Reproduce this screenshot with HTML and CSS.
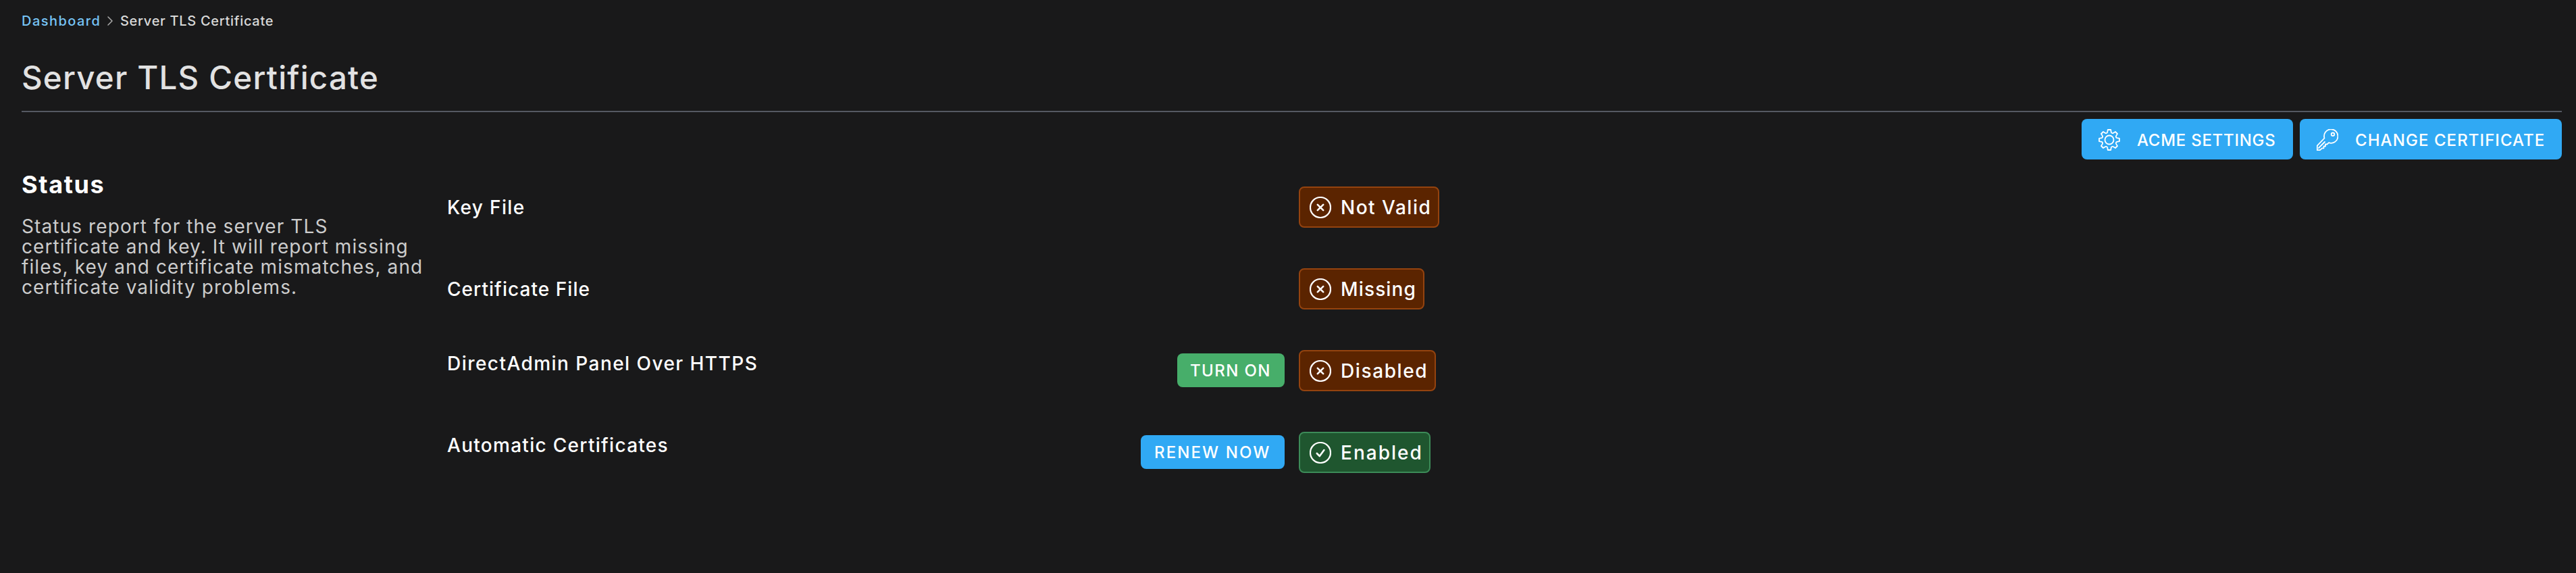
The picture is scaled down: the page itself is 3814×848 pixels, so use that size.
FILE: index.html
```html
<!DOCTYPE html>
<html lang="en">

<head>
    <meta charset="UTF-8">
    <meta name="viewport" content="width=device-width, initial-scale=1.0">
    <title>Server TLS Certificate</title>
    <link rel="stylesheet" href="styles.css">
</head>

<body>
    <div class="page">
        <nav class="breadcrumbs">
            <a class="crumb-link">Dashboard</a>
            <svg class="crumb-arrow" viewBox="0 0 8 14">
                <path d="M1 1l6 6-6 6" />
            </svg>
            <span class="crumb-current">Server TLS Certificate</span>
        </nav>
        <h1 class="title">Server TLS Certificate</h1>
        <div class="toolbar">
            <button class="btn btn-acme">
                <svg class="btn-icon" viewBox="0 0 32 32">
                    <path d="M13.800 1h4.400l.6 3.600q.2 1 1.300 1.400t2-.2L25 4l3 3-1.800 2.900q-.6.900-.2 2t1.400 1.300l3.600.6v4.400l-3.600.6q-1 .2-1.400 1.300t.2 2L28 25l-3 3-2.900-1.800q-.9-.6-2-.2t-1.300 1.400l-.6 3.600h-4.400l-.6-3.600q-.2-1-1.300-1.400t-2 .2L7 28l-3-3 1.800-2.900q.6-.9.2-2t-1.400-1.300L1 18.200v-4.400l3.600-.6q1-.2 1.400-1.300t-.2-2L4 7l3-3 2.900 1.800q.9.600 2 .2t1.300-1.400z" />
                    <circle cx="16" cy="16" r="6.500" />
                </svg>
                <span>ACME SETTINGS</span>
            </button>
            <button class="btn btn-change">
                <svg class="btn-icon" viewBox="0 0 32 32">
                    <path d="M11.500 13.500A10.200 10.200 0 1 1 18 20.200l-2.500 2.300H13v3h-2.500v2.800H8L5 31.200H.8v-6.500z" />
                    <path d="M3 28l9-9" />
                    <circle cx="24" cy="7.800" r="2.300" />
                </svg>
                <span>CHANGE CERTIFICATE</span>
            </button>
        </div>
        <div class="section">
            <div class="section-info">
                <h2>Status</h2>
                <p>Status report for the server TLS certificate and key. It will report missing files, key and certificate mismatches, and certificate validity problems.</p>
            </div>
            <div class="rows">
                <div class="row">
                    <div class="label">Key File</div>
                    <div class="action"></div>
                    <div class="badge danger badge-invalid">
                        <svg class="badge-icon" viewBox="0 0 32 32">
                            <circle cx="16" cy="16" r="15" />
                            <path d="M11.800 11.800l8.400 8.400M20.200 11.800l-8.400 8.400" />
                        </svg>
                        <span>Not Valid</span>
                    </div>
                </div>
                <div class="row">
                    <div class="label label-cert">Certificate File</div>
                    <div class="action"></div>
                    <div class="badge danger badge-missing">
                        <svg class="badge-icon" viewBox="0 0 32 32">
                            <circle cx="16" cy="16" r="15" />
                            <path d="M11.800 11.800l8.400 8.400M20.200 11.800l-8.400 8.400" />
                        </svg>
                        <span>Missing</span>
                    </div>
                </div>
                <div class="row">
                    <div class="label label-top">DirectAdmin Panel Over HTTPS</div>
                    <div class="action">
                        <button class="btn-small green">TURN ON</button>
                    </div>
                    <div class="badge danger badge-disabled">
                        <svg class="badge-icon" viewBox="0 0 32 32">
                            <circle cx="16" cy="16" r="15" />
                            <path d="M11.800 11.800l8.400 8.400M20.200 11.800l-8.400 8.400" />
                        </svg>
                        <span>Disabled</span>
                    </div>
                </div>
                <div class="row">
                    <div class="label label-top label-auto">Automatic Certificates</div>
                    <div class="action">
                        <button class="btn-small blue">RENEW NOW</button>
                    </div>
                    <div class="badge success badge-enabled">
                        <svg class="badge-icon" viewBox="0 0 32 32">
                            <circle cx="16" cy="16" r="15" />
                            <path d="M10.800 17l4 4 6.600-9" />
                        </svg>
                        <span>Enabled</span>
                    </div>
                </div>
            </div>
        </div>
    </div>
</body>

</html>
```
FILE: styles.css
```css
* {
    margin: 0;
    padding: 0;
    box-sizing: border-box;
}

body {
    background-color: #19191a;
    color: #fff;
    font-family: Inter, "Open Sans", sans-serif;
    font-weight: 500;
}

svg {
    display: block;
    flex-shrink: 0;
    fill: none;
    stroke: #fff;
    stroke-linecap: round;
    stroke-linejoin: round;
}

.page {
    padding: 20px 21px 0 32px;
}

.breadcrumbs {
    display: flex;
    align-items: center;
    height: 22px;
    font-size: 20px;
    line-height: 22px;
    font-weight: 450;
    white-space: nowrap;
}

.crumb-link {
    width: 127px;
    color: #76c3f5;
    letter-spacing: 1.45px;
}

.crumb-arrow {
    width: 8px;
    height: 14px;
    margin-right: 11px;
    stroke: #aaa;
    stroke-width: 1.5;
}

.crumb-current {
    color: #d9d9d9;
    letter-spacing: 0.7px;
}

.title {
    margin-top: 45px;
    padding-bottom: 21px;
    border-bottom: 2px solid #555962;
    color: #e2e2e2;
    font-size: 47.5px;
    font-weight: 500;
    line-height: 56px;
    letter-spacing: 1.19px;
}

/* 工具栏 */
.toolbar {
    display: flex;
    justify-content: flex-end;
    gap: 10px;
    margin-top: 10px;
}

.btn,
.btn-small {
    border: none;
    border-radius: 8px;
    background-color: #30a9f4;
    color: #fff;
    font-family: inherit;
    font-size: 24px;
    font-weight: 500;
    white-space: nowrap;
    cursor: pointer;
}

.btn {
    display: flex;
    align-items: center;
    gap: 25px;
    height: 60px;
    padding: 2px 0 0 25px;
}

.btn-icon {
    width: 32px;
    height: 32px;
    stroke-width: 1.8;
}

.btn-acme {
    width: 313px;
    letter-spacing: 0.73px;
}

.btn-change {
    width: 388px;
    letter-spacing: 1.07px;
}

/* 状态 */
.section {
    display: flex;
    margin-top: 16px;
}

.section-info {
    width: 630px;
}

.section-info h2 {
    font-size: 36px;
    font-weight: 700;
    line-height: 42px;
    letter-spacing: 1.6px;
}

.section-info p {
    width: 597px;
    margin-top: 26px;
    color: #ccc;
    font-size: 28px;
    font-weight: 400;
    line-height: 30px;
    letter-spacing: 1.1px;
}

.rows {
    display: flex;
    flex-direction: column;
    gap: 60px;
    padding-top: 24px;
}

.row {
    display: grid;
    grid-template-columns: 620px 620px auto;
    align-items: center;
    height: 61px;
}

.label {
    font-size: 28px;
    line-height: 30px;
    letter-spacing: 1.35px;
    white-space: nowrap;
}

.label-cert {
    letter-spacing: 1.05px;
}

.label-top {
    align-self: start;
    margin-top: 5px;
    letter-spacing: 1.45px;
}

.label-auto {
    letter-spacing: 1.29px;
}

.action {
    display: flex;
    justify-content: flex-end;
}

.btn-small {
    height: 50px;
    margin-bottom: 1px;
    padding-left: 19px;
    text-align: left;
}

.green {
    width: 159px;
    background-color: #47ae6a;
    letter-spacing: 1.4px;
}

.blue {
    width: 213px;
    padding-left: 20px;
    letter-spacing: 2.1px;
}

.badge {
    display: flex;
    align-items: center;
    gap: 14px;
    height: 61px;
    margin-left: 21px;
    padding-left: 14px;
    border: 2px solid;
    border-radius: 8px;
    font-size: 28px;
    line-height: 30px;
    white-space: nowrap;
}

.badge-icon {
    width: 32px;
    height: 32px;
    stroke-width: 2.2;
}

.badge-icon path {
    stroke-width: 2.6;
}

.danger {
    border-color: #94430f;
    background-color: #5b2400;
}

.success {
    border-color: #3c8b58;
    background-color: #1f562f;
}

.badge-invalid {
    width: 208px;
    letter-spacing: 1.5px;
}

.badge-missing {
    width: 186px;
    letter-spacing: 1.15px;
}

.badge-disabled {
    width: 203px;
    letter-spacing: 1.6px;
}

.badge-enabled {
    width: 195px;
    letter-spacing: 2px;
}
```
